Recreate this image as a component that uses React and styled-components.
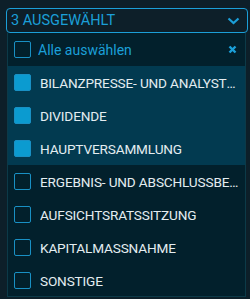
import React from "react";
import styled, { createGlobalStyle } from "styled-components";

const Global = createGlobalStyle`
  body {
    margin: 0;
    background: #0d1f29;
    font-family: Roboto, "Liberation Sans", sans-serif;
  }
`;

const Page = styled.div`
  width: 250px;
  height: 299px;
  padding: 8px 2px 0 6px;
  box-sizing: border-box;
  overflow: hidden;
`;

const SelectBox = styled.div`
  height: 25px;
  border: 1px solid #1b9fd8;
  border-radius: 4px;
  box-sizing: border-box;
  display: flex;
  align-items: center;
  justify-content: space-between;
  padding: 0 7px 0 4px;
  color: #1b9fd8;
  font-size: 14.5px;
`;

const Panel = styled.div`
  margin: 0 2px 0 1px;
  background: #02202c;
  border: 1px solid #0c3a48;
  border-top: none;
  height: 264px;
  box-sizing: border-box;
`;

const AllRow = styled.div`
  height: 33px;
  display: flex;
  align-items: center;
  padding: 0 8px 0 6px;
  color: #1b9fd8;
  font-size: 14px;
`;

const Group = styled.div`
  background: ${(p) => (p.$selected ? "#023a50" : "transparent")};
`;

const Row = styled.div`
  height: 33px;
  display: flex;
  align-items: center;
  padding: 0 6px;
  color: #e4edf1;
  font-size: 13.6px;
  letter-spacing: -0.15px;
  white-space: nowrap;
`;

const Box = styled.span`
  flex: none;
  width: 17px;
  height: 17px;
  box-sizing: border-box;
  border-radius: 2px;
  border: 1px solid #1990c4;
  background: ${(p) => (p.$checked ? "#0b9bd0" : "transparent")};
  margin-right: ${(p) => (p.$tight ? "7px" : "9px")};
`;

const Label = styled.span`
  flex: 1;
  overflow: hidden;
  text-overflow: ellipsis;
`;

const items = [
  ["BILANZPRESSE- UND ANALYSTENKONFERENZ", true],
  ["DIVIDENDE", true],
  ["HAUPTVERSAMMLUNG", true],
  ["ERGEBNIS- UND ABSCHLUSSBERICHT", false],
  ["AUFSICHTSRATSSITZUNG", false],
  ["KAPITALMASSNAHME", false],
  ["SONSTIGE", false],
];

const Chevron = () => (
  <svg width="13" height="8" viewBox="0 0 13 8">
    <path d="M1.5 1.5 L6.5 6 L11.5 1.5" fill="none" stroke="#1b9fd8" strokeWidth="2.2" />
  </svg>
);

const Close = () => (
  <svg width="9" height="9" viewBox="0 0 9 9">
    <path d="M1.5 1.5 L7.5 7.5 M7.5 1.5 L1.5 7.5" stroke="#1b9fd8" strokeWidth="2.4" />
  </svg>
);

export default function App() {
  const checked = items.filter((i) => i[1]);
  const rest = items.filter((i) => !i[1]);
  return (
    <Page>
      <Global />
      <SelectBox>
        <span>3 AUSGEWÄHLT</span>
        <Chevron />
      </SelectBox>
      <Panel>
        <AllRow>
          <Box $tight />
          <Label>Alle auswählen</Label>
          <Close />
        </AllRow>
        <Group $selected>
          {checked.map(([t]) => (
            <Row key={t}>
              <Box $checked />
              <Label>{t}</Label>
            </Row>
          ))}
        </Group>
        <Group>
          {rest.map(([t]) => (
            <Row key={t}>
              <Box />
              <Label>{t}</Label>
            </Row>
          ))}
        </Group>
      </Panel>
    </Page>
  );
}
